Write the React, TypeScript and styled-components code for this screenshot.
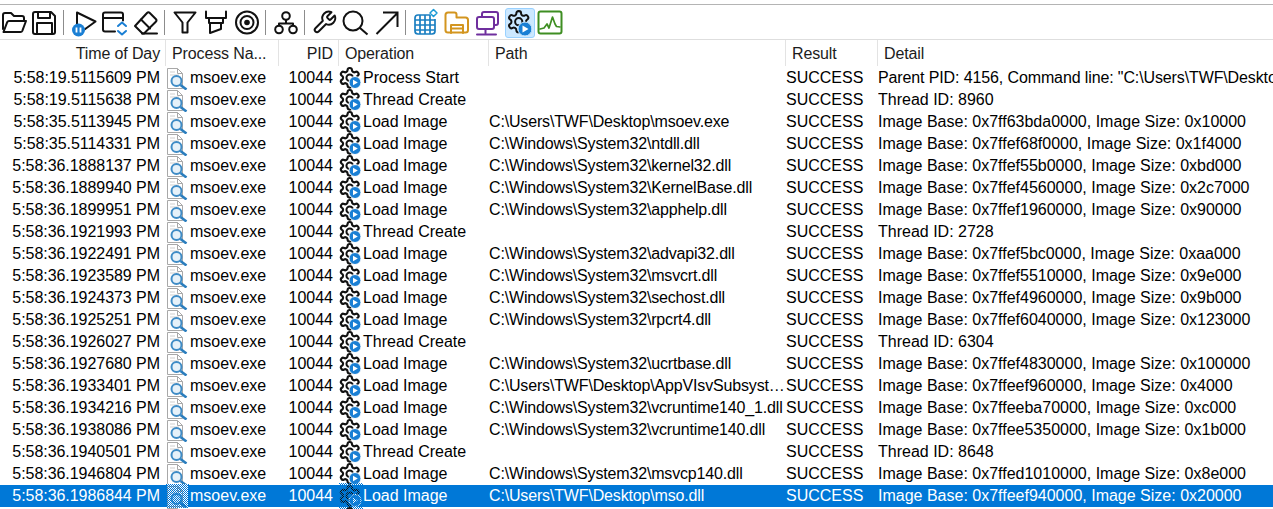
import * as React from "react";
import styled, { createGlobalStyle } from "styled-components";

const COLUMNS = "166px 113px 60px 150px 297px 92px 700px";
const GEAR_PATH =
  "M12.22 2h-.44a2 2 0 0 0-2 2v.18a2 2 0 0 1-1 1.73l-.43.25a2 2 0 0 1-2 0l-.15-.08a2 2 0 0 0-2.73.73l-.22.38a2 2 0 0 0 .73 2.73l.15.1a2 2 0 0 1 1 1.72v.51a2 2 0 0 1-1 1.74l-.15.09a2 2 0 0 0-.73 2.73l.22.38a2 2 0 0 0 2.73.73l.15-.08a2 2 0 0 1 2 0l.43.25a2 2 0 0 1 1 1.73V20a2 2 0 0 0 2 2h.44a2 2 0 0 0 2-2v-.18a2 2 0 0 1 1-1.73l.43-.25a2 2 0 0 1 2 0l.15.08a2 2 0 0 0 2.73-.73l.22-.39a2 2 0 0 0-.73-2.73l-.15-.08a2 2 0 0 1-1-1.74v-.5a2 2 0 0 1 1-1.74l.15-.09a2 2 0 0 0 .73-2.73l-.22-.38a2 2 0 0 0-2.73-.73l-.15.08a2 2 0 0 1-2 0l-.43-.25a2 2 0 0 1-1-1.73V4a2 2 0 0 0-2-2z";

const GlobalStyle = createGlobalStyle`
  html, body {
    margin: 0;
    height: 509px;
    overflow: hidden;
    background: #fff;
    font-family: "Liberation Sans", Arial, sans-serif;
  }
`;

const SPage = styled.div`
  width: 1273px;
  height: 509px;
  overflow: hidden;
  padding-top: 4px;
  box-sizing: border-box;
`;

const SToolbar = styled.div`
  display: flex;
  height: 34px;
  margin-left: -2px;
  width: 1275px;
  border-top: 1px solid #b4b4b4;
  border-bottom: 1px solid #dedede;
`;

const SToolButton = styled.div<{ $active?: boolean }>`
  width: 31px;
  height: 34px;
  flex: none;
  position: relative;
  & svg {
    display: block;
    position: relative;
  }
  ${(p) =>
    p.$active &&
    `
    &::before {
      content: "";
      position: absolute;
      left: 2px;
      top: 3px;
      width: 28px;
      height: 28px;
      background: #cce8ff;
      border: 1px solid #99d1ff;
      border-radius: 3px;
    }
  `}
`;

const SSeparator = styled.div`
  width: 1px;
  flex: none;
  margin: 5px 4px 4px 3px;
  background: #8c8c8c;
`;

const SHeader = styled.div`
  display: grid;
  grid-template-columns: ${COLUMNS};
  height: 26px;
  padding-bottom: 1px;
`;

const SHeaderCell = styled.div<{ $right?: boolean }>`
  font-size: 16px;
  line-height: 27px;
  letter-spacing: -0.13px;
  color: #1c1c1c;
  padding: 0 5px 0 6px;
  text-align: ${(p) => (p.$right ? "right" : "left")};
  border-right: 1px solid #e3e3e3;
  white-space: nowrap;
  overflow: hidden;
`;

const SRow = styled.div<{ $selected?: boolean }>`
  display: grid;
  grid-template-columns: ${COLUMNS};
  height: 22px;
  background: ${(p) => (p.$selected ? "#0078d7" : "transparent")};
  color: ${(p) => (p.$selected ? "#fff" : "#000")};
  font-size: 16px;
  line-height: 22px;
`;

const STimeCell = styled.div`
  text-align: right;
  padding-right: 6px;
  letter-spacing: -0.05px;
  white-space: nowrap;
`;

const SIconCell = styled.div<{ $gap: number }>`
  display: flex;
  align-items: center;
  height: 22px;
  white-space: nowrap;
  & svg {
    flex: none;
    margin-right: ${(p) => p.$gap}px;
  }
`;

const SPidCell = styled.div`
  text-align: right;
  padding-right: 6px;
`;

const SPathCell = styled.div`
  white-space: nowrap;
  overflow: hidden;
  text-overflow: ellipsis;
  letter-spacing: -0.16px;
`;

const STextCell = styled.div<{ $tight?: boolean }>`
  white-space: nowrap;
  overflow: hidden;
  letter-spacing: ${(p) => (p.$tight ? "-0.12px" : "normal")};
`;

interface ToolIconProps {
  x: number;
  children: React.ReactNode;
}

// children are drawn in page coordinates, the viewBox slides to the button
const ToolIcon = ({ x, children }: ToolIconProps) => (
  <svg
    width={31}
    height={34}
    viewBox={`${x} 5 31 34`}
    fill="none"
    stroke="#111"
    strokeWidth={2}
    strokeLinejoin="round"
    strokeLinecap="round"
  >
    {children}
  </svg>
);

const Dither = ({ id, w, h }: { id: string; w: number; h: number }) => (
  <>
    <defs>
      <pattern id={id} width={2} height={2} patternUnits="userSpaceOnUse">
        <rect width={1} height={1} fill="#0078d7" />
        <rect x={1} y={1} width={1} height={1} fill="#0078d7" />
      </pattern>
    </defs>
    <rect width={w} height={h} fill={`url(#${id})`} stroke="none" />
  </>
);

const ProcessIcon = ({ selected }: { selected?: boolean }) => (
  <svg width={23} height={24} viewBox="0 0 23 24" fill="none">
    {selected && <rect x={1} y={0} width={21} height={24} fill="#fff" />}
    <path d="M1.5 2.500h10l5 5v15h-15z" fill="#fff" stroke="#a8a8a8" />
    <path d="M11.500 2.500v5h5" stroke="#a8a8a8" />
    <path d="M4 6h5M4 9h9" stroke="#cfcfcf" />
    <circle cx={10.500} cy={15} r={5} fill="#e6f1f9" stroke="#3f8cc6" strokeWidth={2} />
    <path d="M14.500 19l6 4.500" stroke="#2a7dbd" strokeWidth={2.600} />
    {selected && <Dither id="dither-process" w={23} h={24} />}
  </svg>
);

const OperationIcon = ({ selected }: { selected?: boolean }) => (
  <svg width={24} height={26} viewBox="0 0 24 26" fill="none">
    <g transform="translate(-1 1) scale(0.98)">
      <path d={GEAR_PATH} stroke="#111" strokeWidth={2.200} />
      <circle cx={12} cy={12} r={3.400} stroke="#111" strokeWidth={2} />
    </g>
    <circle cx={16} cy={17.500} r={6} fill="#1a7fd4" stroke="#fff" />
    <path d="M14 14.800l4.800 2.700-4.800 2.700z" fill="#fff" />
    {selected && <Dither id="dither-operation" w={24} h={26} />}
  </svg>
);

const Toolbar = () => (
  <SToolbar>
    <SToolButton>
      <ToolIcon x={-2}>
        <path d="M3 29V15a2 2 0 0 1 2-2h6l3 3h8a2 2 0 0 1 2 2v2" />
        <path d="M3.500 32h17a2 2 0 0 0 1.800-1.200L26 21H9a2 2 0 0 0-1.800 1.200z" />
      </ToolIcon>
    </SToolButton>
    <SToolButton>
      <ToolIcon x={29}>
        <path d="M35 12h16l4 4v16a2 2 0 0 1-2 2H35a2 2 0 0 1-2-2V14a2 2 0 0 1 2-2z" />
        <path d="M38 12v6h12v-6M37 34V23h15v11" />
      </ToolIcon>
    </SToolButton>
    <SSeparator />
    <SToolButton>
      <ToolIcon x={68}>
        <path d="M77 24V12.500l18.500 9-11 8" />
        <circle cx={78.500} cy={30} r={6.500} fill="#1a7fd4" stroke="none" />
        <path d="M76.500 27.500v5M80.500 27.500v5" stroke="#fff" strokeWidth={1.800} strokeLinecap="butt" />
      </ToolIcon>
    </SToolButton>
    <SToolButton>
      <ToolIcon x={99}>
        <path d="M115 31.500h-10a2 2 0 0 1-2-2v-15a2 2 0 0 1 2-2h16a2 2 0 0 1 2 2v6" />
        <path d="M103.500 18h19" />
        <path d="M118 26l4-3.500 4 3.500M118 31l4 3.500 4-3.500" stroke="#1a7fd4" />
      </ToolIcon>
    </SToolButton>
    <SToolButton>
      <ToolIcon x={130}>
        <path d="M135 26l12-13a2 2 0 0 1 2.800 0l6 6a2 2 0 0 1 0 2.800L144 33.500h-1.500z" />
        <path d="M141 19.500l9 9M142 33.500h15" />
      </ToolIcon>
    </SToolButton>
    <SSeparator />
    <SToolButton>
      <ToolIcon x={169}>
        <path d="M174.500 12.500h21l-8 10v10h-5v-10z" />
      </ToolIcon>
    </SToolButton>
    <SToolButton>
      <ToolIcon x={200}>
        <path d="M206 11.500v6.500h20v-6.500" />
        <path d="M209 18v5h14v-5M210 23v10l11-4v-6" />
      </ToolIcon>
    </SToolButton>
    <SToolButton>
      <ToolIcon x={231}>
        <circle cx={247} cy={22.500} r={11} />
        <circle cx={247} cy={22.500} r={6.500} />
        <circle cx={247} cy={22.500} r={2.800} fill="#111" stroke="none" />
      </ToolIcon>
    </SToolButton>
    <SSeparator />
    <SToolButton>
      <ToolIcon x={270}>
        <circle cx={286} cy={16} r={3.800} />
        <circle cx={279} cy={29.500} r={3.800} />
        <circle cx={293} cy={29.500} r={3.800} />
        <path d="M286 20v3.500M279 25.500v-2h14v2" />
      </ToolIcon>
    </SToolButton>
    <SSeparator />
    <SToolButton>
      <ToolIcon x={309}>
        <g transform="translate(311.500 9.500) scale(1.080)" strokeWidth={1.800}>
          <path d="M14.700 6.300a1 1 0 0 0 0 1.400l1.600 1.600a1 1 0 0 0 1.400 0l3.770-3.770a6 6 0 0 1-7.940 7.940l-6.910 6.910a2.120 2.120 0 0 1-3-3l6.910-6.910a6 6 0 0 1 7.940-7.940l-3.760 3.760z" />
        </g>
      </ToolIcon>
    </SToolButton>
    <SToolButton>
      <ToolIcon x={340}>
        <circle cx={353} cy={21} r={9.500} />
        <path d="M360 28l7.500 6.500" strokeLinecap="butt" />
      </ToolIcon>
    </SToolButton>
    <SToolButton>
      <ToolIcon x={371}>
        <path d="M376.500 34l21-21M383 12.500h14.500v14.500" strokeLinecap="butt" strokeLinejoin="miter" />
      </ToolIcon>
    </SToolButton>
    <SSeparator />
    <SToolButton>
      <ToolIcon x={410}>
        <path
          d="M430 15h-12a3 3 0 0 0-3 3v13a3 3 0 0 0 3 3h14a3 3 0 0 0 3-3V19M415 20h20M415 25h20M415 30h20M420 15v19M425 15v19M430 15v19"
          stroke="#1a7fc1"
          strokeWidth={1.700}
          strokeLinecap="butt"
        />
        <path d="M433.500 9.500l3.500 3.500-3.500 3.500-3.500-3.500z" stroke="#1a9ad6" strokeWidth={1.500} fill="#fff" />
      </ToolIcon>
    </SToolButton>
    <SToolButton>
      <ToolIcon x={441}>
        <path
          d="M445.500 31V15a2.500 2.500 0 0 1 2.500-2.500h6.500a2 2 0 0 1 2 2v3h9a2.500 2.500 0 0 1 2.500 2.500v10a2.500 2.500 0 0 1-2.500 2.500h-17.500a2.500 2.500 0 0 1-2.500-2.500z"
          stroke="#d3951f"
        />
        <path d="M451 33v-8h12v8M451 28.500h12" stroke="#d3951f" />
      </ToolIcon>
    </SToolButton>
    <SToolButton>
      <ToolIcon x={472}>
        <path
          d="M479 17h13a2 2 0 0 1 2 2v8a2 2 0 0 1-2 2h-13a2 2 0 0 1-2-2v-8a2 2 0 0 1 2-2zM482 17v-3a2 2 0 0 1 2-2h12a2 2 0 0 1 2 2v9a2 2 0 0 1-2 2h-2"
          stroke="#6f2f9e"
        />
        <path d="M485.500 29v4M477 34.500h19M485.500 33h.01" stroke="#6f2f9e" />
      </ToolIcon>
    </SToolButton>
    <SToolButton $active>
      <ToolIcon x={503}>
        <g transform="translate(506 9) scale(1.06)" strokeWidth={1.900}>
          <path d={GEAR_PATH} />
          <circle cx={12} cy={12} r={3.400} />
        </g>
        <circle cx={525} cy={29} r={7} fill="#1a7fd4" stroke="#cce8ff" strokeWidth={1} />
        <path d="M522.500 25.500l6 3.500-6 3.500z" fill="#fff" stroke="none" />
      </ToolIcon>
    </SToolButton>
    <SToolButton>
      <ToolIcon x={534}>
        <rect x={538.500} y={11.500} width={23} height={22} rx={2} stroke="#3e8e22" />
        <path d="M540 29l4-1 3-4 2 4 3.500-11 2.500 7 1.500 2.500 3.500.5" stroke="#3e8e22" strokeWidth={1.700} />
      </ToolIcon>
    </SToolButton>
  </SToolbar>
);

interface LogRow {
  time: string;
  operation: string;
  path: string;
  detail: string;
}

const image = (time: string, path: string, base: string, size: string): LogRow => ({
  time,
  operation: "Load Image",
  path,
  detail: `Image Base: ${base}, Image Size: ${size}`,
});

const thread = (time: string, id: number): LogRow => ({
  time,
  operation: "Thread Create",
  path: "",
  detail: `Thread ID: ${id}`,
});

const ROWS: LogRow[] = [
  {
    time: "5:58:19.5115609 PM",
    operation: "Process Start",
    path: "",
    detail: 'Parent PID: 4156, Command line: "C:\\Users\\TWF\\Desktop\\msoev.exe"',
  },
  thread("5:58:19.5115638 PM", 8960),
  image("5:58:35.5113945 PM", "C:\\Users\\TWF\\Desktop\\msoev.exe", "0x7ff63bda0000", "0x10000"),
  image("5:58:35.5114331 PM", "C:\\Windows\\System32\\ntdll.dll", "0x7ffef68f0000", "0x1f4000"),
  image("5:58:36.1888137 PM", "C:\\Windows\\System32\\kernel32.dll", "0x7ffef55b0000", "0xbd000"),
  image("5:58:36.1889940 PM", "C:\\Windows\\System32\\KernelBase.dll", "0x7ffef4560000", "0x2c7000"),
  image("5:58:36.1899951 PM", "C:\\Windows\\System32\\apphelp.dll", "0x7ffef1960000", "0x90000"),
  thread("5:58:36.1921993 PM", 2728),
  image("5:58:36.1922491 PM", "C:\\Windows\\System32\\advapi32.dll", "0x7ffef5bc0000", "0xaa000"),
  image("5:58:36.1923589 PM", "C:\\Windows\\System32\\msvcrt.dll", "0x7ffef5510000", "0x9e000"),
  image("5:58:36.1924373 PM", "C:\\Windows\\System32\\sechost.dll", "0x7ffef4960000", "0x9b000"),
  image("5:58:36.1925251 PM", "C:\\Windows\\System32\\rpcrt4.dll", "0x7ffef6040000", "0x123000"),
  thread("5:58:36.1926027 PM", 6304),
  image("5:58:36.1927680 PM", "C:\\Windows\\System32\\ucrtbase.dll", "0x7ffef4830000", "0x100000"),
  image("5:58:36.1933401 PM", "C:\\Users\\TWF\\Desktop\\AppVIsvSubsystems64.dll", "0x7ffeef960000", "0x4000"),
  image("5:58:36.1934216 PM", "C:\\Windows\\System32\\vcruntime140_1.dll", "0x7ffeeba70000", "0xc000"),
  image("5:58:36.1938086 PM", "C:\\Windows\\System32\\vcruntime140.dll", "0x7ffee5350000", "0x1b000"),
  thread("5:58:36.1940501 PM", 8648),
  image("5:58:36.1946804 PM", "C:\\Windows\\System32\\msvcp140.dll", "0x7ffed1010000", "0x8e000"),
  image("5:58:36.1986844 PM", "C:\\Users\\TWF\\Desktop\\mso.dll", "0x7ffeef940000", "0x20000"),
];

const SELECTED_INDEX = 19;

const App = () => (
  <SPage>
    <GlobalStyle />
    <Toolbar />
    <SHeader>
      <SHeaderCell $right>Time of Day</SHeaderCell>
      <SHeaderCell>Process Na...</SHeaderCell>
      <SHeaderCell $right>PID</SHeaderCell>
      <SHeaderCell>Operation</SHeaderCell>
      <SHeaderCell>Path</SHeaderCell>
      <SHeaderCell>Result</SHeaderCell>
      <SHeaderCell>Detail</SHeaderCell>
    </SHeader>
    {ROWS.map((row, i) => {
      const selected = i === SELECTED_INDEX;
      return (
        <SRow key={row.time} $selected={selected}>
          <STimeCell>{row.time}</STimeCell>
          <SIconCell $gap={1}>
            <ProcessIcon selected={selected} />
            msoev.exe
          </SIconCell>
          <SPidCell>10044</SPidCell>
          <SIconCell $gap={0}>
            <OperationIcon selected={selected} />
            {row.operation}
          </SIconCell>
          <SPathCell>{row.path}</SPathCell>
          <STextCell>SUCCESS</STextCell>
          <STextCell $tight={i === 0}>{row.detail}</STextCell>
        </SRow>
      );
    })}
    <SRow>
      <STimeCell />
      <SIconCell $gap={1}>
        <ProcessIcon />
      </SIconCell>
      <SPidCell />
      <SIconCell $gap={0}>
        <OperationIcon />
      </SIconCell>
    </SRow>
  </SPage>
);

export default App;
